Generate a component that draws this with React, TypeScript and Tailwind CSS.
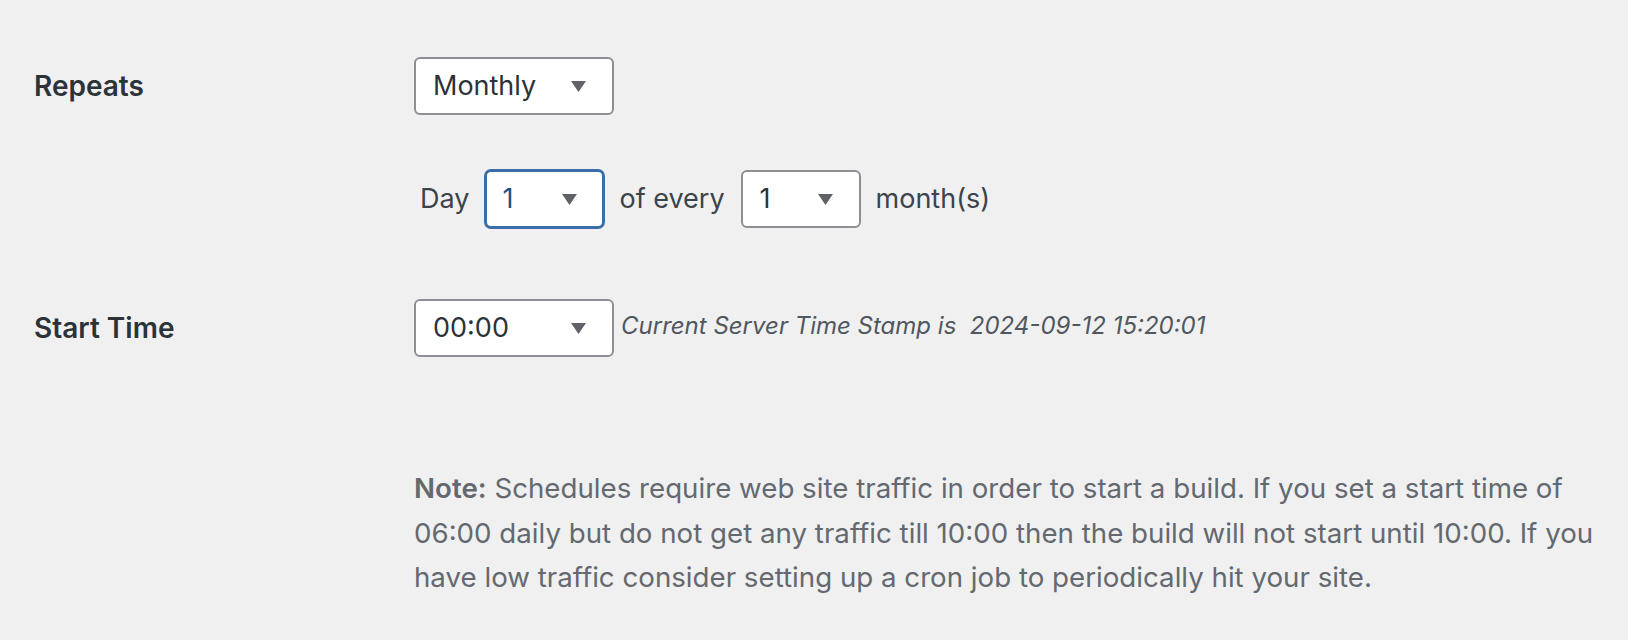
import type { ReactNode } from "react";

const font = { fontFamily: "Inter, 'Noto Sans', sans-serif" };

function Caret() {
  return (
    <svg width="15" height="11" viewBox="0 0 15 11" className="shrink-0">
      <polygon points="0,0 15,0 7.5,11" fill="#5f6368" />
    </svg>
  );
}

function SelectBox({
  value,
  width,
  focused = false,
}: {
  value: string;
  width: string;
  focused?: boolean;
}) {
  return (
    <div
      className={
        focused
          ? `flex h-[60px] ${width} items-center justify-between rounded-[7px] border-[3px] border-[#3b6ea8] bg-white pl-[15px] pr-[25px] text-[27px] text-[#1f4e85]`
          : `flex h-[58px] ${width} items-center justify-between rounded-[6px] border-2 border-[#8c8f94] bg-white pl-[17px] pr-[26px] text-[27px] text-[#2c3338]`
      }
    >
      <span>{value}</span>
      <Caret />
    </div>
  );
}

function Row({ label, children }: { label?: string; children: ReactNode }) {
  return (
    <div className="flex items-center">
      <div className="w-[380px] shrink-0 text-[28px] font-semibold text-[#2c3338]">
        {label}
      </div>
      <div className="flex items-center">{children}</div>
    </div>
  );
}

export default function App() {
  return (
    <div
      style={font}
      className="h-[640px] w-full overflow-hidden bg-[#f0f0f1] pl-[34px] pt-[57px]"
    >
      <Row label="Repeats">
        <SelectBox value="Monthly" width="w-[200px]" />
      </Row>

      <div className="mt-[54px] flex items-center pl-[386px] text-[27px] text-[#3c434a]">
        <span>Day</span>
        <div className="ml-[15px]">
          <SelectBox value="1" width="w-[121px]" focused />
        </div>
        <span className="ml-[14px]">of every</span>
        <div className="ml-[16px]">
          <SelectBox value="1" width="w-[120px]" />
        </div>
        <span className="ml-[15px]">month(s)</span>
      </div>

      <div className="mt-[70px]">
        <Row label="Start Time">
          <SelectBox value="00:00" width="w-[200px]" />
          <span className="ml-[7px] -mt-[4px] text-[24px] italic text-[#50575e]">
            Current Server Time Stamp is&nbsp;&nbsp;2024-09-12 15:20:01
          </span>
        </Row>
      </div>

      <p className="ml-[380px] mt-[109px] w-[1210px] text-[27.7px] leading-[44.6px] text-[#646970]">
        <strong className="font-semibold">Note:</strong> Schedules require web
        site traffic in order to start a build. If you set a start time of 06:00
        daily but do not get any traffic till 10:00 then the build will not
        start until 10:00. If you have low traffic consider setting up a cron
        job to periodically hit your site.
      </p>
    </div>
  );
}
